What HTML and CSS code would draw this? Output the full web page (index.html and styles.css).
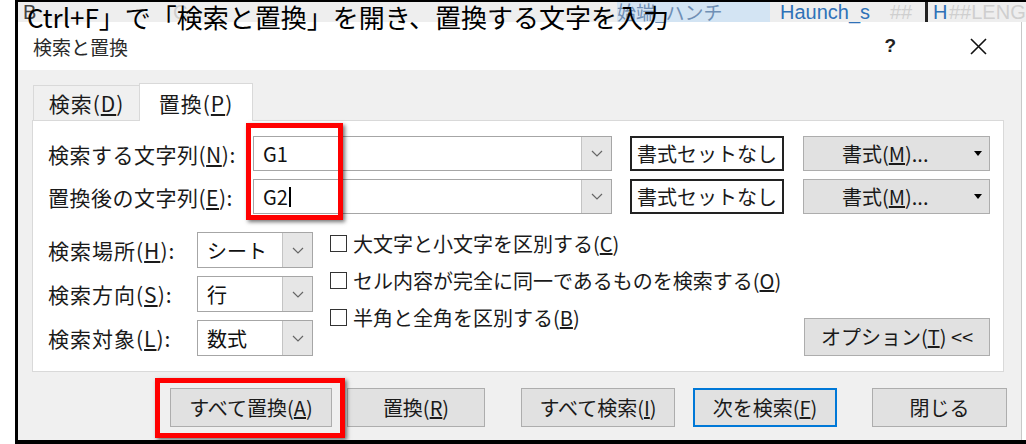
FILE: index.html
```html
<!DOCTYPE html>
<html>
<head>
  <meta charset="utf-8">
  <title>検索と置換</title>
  <link rel="stylesheet" href="styles.css">
</head>
<body>
  <div class="frame">
    <div class="sheet">
      <span class="cell cell-b">B</span>
      <span class="cell cell-faint cell-c">C</span>
      <span class="cell cell-hi">始端_ハンチ</span>
      <span class="cell cell-blue">Haunch_s</span>
      <span class="cell cell-faint cell-hash">##</span>
      <span class="cursor-bar"></span>
      <span class="cell cell-blue cell-h">H</span>
      <span class="cell cell-faint">##LENG</span>
    </div>

    <div class="dialog">
      <div class="titlebar">
        <span class="title">検索と置換</span>
        <span class="help">?</span>
        <svg class="close" width="17" height="17" viewBox="0 0 17 17">
          <path d="M1 1 L16 16 M16 1 L1 16" stroke="#111" stroke-width="1.6" fill="none"/>
        </svg>
      </div>

      <div class="dialog-body">
        <div class="tabs">
          <div class="tab">検索(<u>D</u>)</div>
          <div class="tab active">置換(<u>P</u>)</div>
        </div>

        <div class="panel">
          <div class="find-row">
            <span class="label">検索する文字列(<u>N</u>):</span>
            <div class="combo wide">
              <span class="value">G1</span>
              <span class="drop"><svg width="12" height="7" viewBox="0 0 12 7"><path d="M1 1 L6 6 L11 1" stroke="#666" stroke-width="1.2" fill="none"/></svg></span>
            </div>
            <button class="btn fmt-none">書式セットなし</button>
            <button class="btn fmt">書式(<u>M</u>)...<span class="caret"></span></button>
          </div>
          <div class="find-row">
            <span class="label">置換後の文字列(<u>E</u>):</span>
            <div class="combo wide">
              <span class="value">G2<span class="text-cursor"></span></span>
              <span class="drop"><svg width="12" height="7" viewBox="0 0 12 7"><path d="M1 1 L6 6 L11 1" stroke="#666" stroke-width="1.2" fill="none"/></svg></span>
            </div>
            <button class="btn fmt-none">書式セットなし</button>
            <button class="btn fmt">書式(<u>M</u>)...<span class="caret"></span></button>
          </div>

          <div class="options">
            <div class="selects">
              <div class="sel-row">
                <span class="sel-label">検索場所(<u>H</u>):</span>
                <div class="combo small">
                  <span class="value">シート</span>
                  <span class="drop"><svg width="12" height="7" viewBox="0 0 12 7"><path d="M1 1 L6 6 L11 1" stroke="#666" stroke-width="1.2" fill="none"/></svg></span>
                </div>
              </div>
              <div class="sel-row">
                <span class="sel-label">検索方向(<u>S</u>):</span>
                <div class="combo small">
                  <span class="value">行</span>
                  <span class="drop"><svg width="12" height="7" viewBox="0 0 12 7"><path d="M1 1 L6 6 L11 1" stroke="#666" stroke-width="1.2" fill="none"/></svg></span>
                </div>
              </div>
              <div class="sel-row">
                <span class="sel-label">検索対象(<u>L</u>):</span>
                <div class="combo small">
                  <span class="value">数式</span>
                  <span class="drop"><svg width="12" height="7" viewBox="0 0 12 7"><path d="M1 1 L6 6 L11 1" stroke="#666" stroke-width="1.2" fill="none"/></svg></span>
                </div>
              </div>
            </div>

            <div class="checks">
              <div class="check"><span class="box"></span>大文字と小文字を区別する(<u>C</u>)</div>
              <div class="check"><span class="box"></span>セル内容が完全に同一であるものを検索する(<u>O</u>)</div>
              <div class="check"><span class="box"></span>半角と全角を区別する(<u>B</u>)</div>
            </div>

            <button class="btn opt">オプション(<u>T</u>) &lt;&lt;</button>
          </div>
        </div>

        <div class="actions">
          <button class="btn b-all">すべて置換(<u>A</u>)</button>
          <button class="btn b-rep">置換(<u>R</u>)</button>
          <button class="btn b-findall">すべて検索(<u>I</u>)</button>
          <button class="btn b-next">次を検索(<u>F</u>)</button>
          <button class="btn b-close">閉じる</button>
        </div>
      </div>
    </div>

    <!-- 注釈 -->
    <div class="caption">Ctrl+F」で「検索と置換」を開き、置換する文字を入力</div>
    <div class="mark mark-input"></div>
    <div class="mark mark-btn"></div>
  </div>
</body>
</html>
```

FILE: styles.css
```css
body {
  margin: 0;
  background-color: #fff;
  font-family: "Noto Sans CJK JP", "Noto Sans", sans-serif;
  color: #1a1a1a;
}

.frame {
  position: relative;
  margin-left: 15px;
  height: 444px;
  box-sizing: border-box;
  border-left: 3px solid #000;
  border-top: 2px solid #000;
  border-bottom: 4px solid #000;
  overflow: hidden;
}

/* 後ろのシート */
.sheet {
  display: flex;
  align-items: center;
  height: 20px;
  background-color: #eeeeee;
  font-family: "Liberation Sans", "Noto Sans CJK JP", sans-serif;
  font-size: 20px;
  line-height: 20px;
  white-space: nowrap;
}

.cell {
  flex: none;
}

.cell-b {
  width: 150px;
  padding-left: 5px;
  color: #444;
}

.cell-faint {
  color: #cfcfcf;
}

.cell-c {
  width: 444px;
}

.cell-hi {
  width: 153px;
  background-color: #d3e4f3;
  color: #6f8fb5;
  font-family: "Noto Sans CJK JP", sans-serif;
  font-size: 19px;
}

.cell-blue {
  color: #2f72b8;
  padding-left: 10px;
  width: 110px;
}

.cell-hash {
  width: 35px;
}

.cursor-bar {
  flex: none;
  width: 3px;
  height: 20px;
  background-color: #222;
}

.cell-h {
  width: 16px;
  padding-left: 5px;
}

/* ダイアログ */
.dialog {
  width: 1004px;
  box-sizing: border-box;
  border-right: 1px solid #c8c8c8;
}

.titlebar {
  display: flex;
  align-items: center;
  height: 48px;
  padding: 0 34px 0 15px;
  background-color: #fff;
}

.title {
  font-size: 19px;
  color: #2a2a2a;
}

.help {
  margin-left: auto;
  margin-right: 74px;
  font-family: "Liberation Sans", sans-serif;
  font-weight: bold;
  font-size: 19px;
  color: #222;
}

.dialog-body {
  height: 370px;
  padding-top: 13px;
  box-sizing: border-box;
  background-color: #f0f0f0;
}

.tabs {
  display: flex;
  align-items: flex-end;
  height: 37px;
  padding-left: 15px;
}

.tab {
  display: flex;
  align-items: center;
  justify-content: center;
  width: 107px;
  height: 35px;
  box-sizing: border-box;
  border: 1px solid #d9d9d9;
  border-bottom: none;
  font-size: 21px;
  letter-spacing: 1px;
}

.tab.active {
  position: relative;
  width: 114px;
  height: 38px;
  margin-left: -1px;
  margin-bottom: -1px;
  background-color: #fff;
}

.panel {
  margin-left: 14px;
  width: 972px;
  height: 252px;
  box-sizing: border-box;
  padding: 15px 13px 0 15px;
  border: 1px solid #d9d9d9;
  background-color: #fff;
}

.find-row {
  display: flex;
  align-items: center;
  height: 35px;
  margin-bottom: 8px;
  font-size: 20px;
}

.label {
  width: 205px;
  font-size: 21px;
  letter-spacing: 0.5px;
}

.combo {
  display: flex;
  height: 100%;
  box-sizing: border-box;
  border: 1px solid #a6a6a6;
  background-color: #fff;
}

.combo.wide {
  width: 359px;
}

.combo .value {
  flex: 1;
  display: flex;
  align-items: center;
  padding-left: 9px;
  color: #111;
}

.text-cursor {
  display: inline-block;
  width: 2px;
  height: 20px;
  margin-left: 1px;
  background-color: #000;
}

.combo .drop {
  display: flex;
  align-items: center;
  justify-content: center;
  width: 29px;
  background-color: #e6e6e6;
  border-left: 1px solid #c4c4c4;
}

.btn {
  display: flex;
  align-items: center;
  justify-content: center;
  height: 39px;
  padding: 0;
  box-sizing: border-box;
  border: 1px solid #adadad;
  background-color: #e1e1e1;
  font-family: inherit;
  font-size: 20px;
  line-height: 1;
  color: #1a1a1a;
}

.find-row .btn {
  height: 35px;
}

.fmt-none {
  width: 154px;
  margin-left: 18px;
  border: 2px solid #222;
  background-color: #fff;
}

.fmt {
  width: 187px;
  margin-left: 19px;
  justify-content: flex-start;
  padding: 0 7px 0 38px;
}

.caret {
  margin-left: auto;
  border-left: 4px solid transparent;
  border-right: 4px solid transparent;
  border-top: 5px solid #000;
}

.options {
  display: flex;
  margin-top: 18px;
  font-size: 20px;
}

.selects {
  display: flex;
  flex-direction: column;
  gap: 8px;
}

.sel-row {
  display: flex;
  align-items: center;
  height: 36px;
}

.sel-label {
  width: 149px;
  font-size: 21px;
  letter-spacing: 1px;
}

.combo.small {
  width: 116px;
}

.checks {
  display: flex;
  flex-direction: column;
  gap: 15px;
  margin-left: 17px;
}

.check {
  display: flex;
  align-items: center;
  height: 22px;
}

.box {
  width: 17px;
  height: 17px;
  box-sizing: border-box;
  margin-right: 6px;
  border: 1px solid #333;
  background-color: #fff;
}

.opt {
  align-self: flex-end;
  margin-left: auto;
  width: 186px;
  height: 38px;
}

.actions {
  display: flex;
  margin-top: 16px;
  padding-left: 152px;
}

.b-all {
  width: 162px;
}

.b-rep {
  width: 138px;
  margin-left: 15px;
}

.b-findall {
  width: 154px;
  margin-left: 36px;
}

.b-next {
  width: 144px;
  margin-left: 18px;
  border: 2px solid #0078d7;
}

.b-close {
  width: 135px;
  margin-left: 35px;
}

/* 注釈 */
.caption {
  position: absolute;
  top: 2px;
  left: 9px;
  font-size: 26px;
  line-height: 1;
  color: #000;
  white-space: nowrap;
}

.mark {
  position: absolute;
  box-sizing: border-box;
  border: 5px solid #ff0000;
  box-shadow: 2px 2px 4px rgba(0, 0, 0, 0.55);
}

.mark-input {
  left: 228px;
  top: 121px;
  width: 97px;
  height: 97px;
}

.mark-btn {
  left: 137px;
  top: 376px;
  width: 190px;
  height: 60px;
}
```
